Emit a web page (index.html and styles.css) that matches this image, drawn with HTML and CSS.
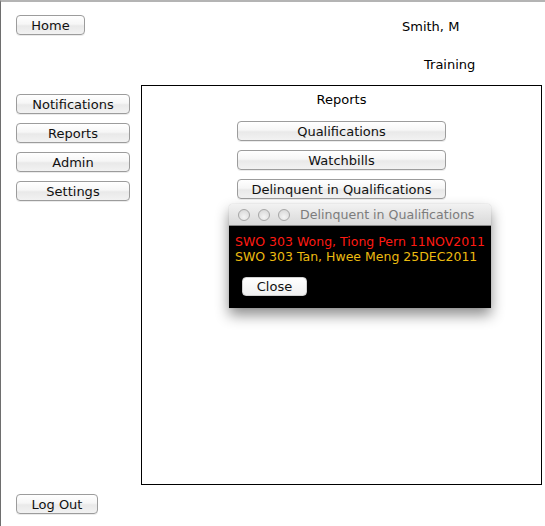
FILE: index.html
```html
<!DOCTYPE html>
<html>
<head>
<meta charset="utf-8">
<link rel="stylesheet" href="styles.css">
</head>
<body>
<div class="window">
  <header class="header">
    <button class="btn btn-home">Home</button>
    <div class="user">
      <div class="user-name">Smith, M</div>
      <div class="user-role">Training</div>
    </div>
  </header>
  <div class="content">
    <nav class="nav">
      <button class="btn btn-nav">Notifications</button>
      <button class="btn btn-nav">Reports</button>
      <button class="btn btn-nav">Admin</button>
      <button class="btn btn-nav">Settings</button>
    </nav>
    <main class="panel">
      <div class="panel-title">Reports</div>
      <div class="report-list">
        <button class="btn btn-report">Qualifications</button>
        <button class="btn btn-report">Watchbills</button>
        <button class="btn btn-report">Delinquent in Qualifications</button>
      </div>
    </main>
  </div>
  <footer class="footer">
    <button class="btn btn-logout">Log Out</button>
  </footer>

  <div class="dialog">
    <div class="dialog-titlebar">
      <span class="light"></span><span class="light"></span><span class="light"></span>
      <span class="dialog-title">Delinquent in Qualifications</span>
    </div>
    <div class="dialog-body">
      <div class="line line-red">SWO 303 Wong, Tiong Pern 11NOV2011</div>
      <div class="line line-yellow">SWO 303 Tan, Hwee Meng 25DEC2011</div>
      <button class="btn btn-close">Close</button>
    </div>
  </div>
</div>
</body>
</html>
```

FILE: styles.css
```css
* { box-sizing: border-box; }
html, body { margin: 0; padding: 0; background: #fff; }
body {
  font-family: "DejaVu Sans", "Liberation Sans", sans-serif;
  font-size: 13px;
  color: #000;
}
.window {
  position: relative;
  width: 545px;
  height: 526px;
  border-top: 2px solid #b4b4b4;
  border-left: 1px solid #6e6e6e;
  overflow: hidden;
}
.btn {
  font-family: "DejaVu Sans", "Liberation Sans", sans-serif;
  font-size: 13px;
  color: #111;
  height: 20px;
  padding: 1px 0 0 0;
  line-height: 17px;
  border: 1px solid #9c9c9c;
  border-radius: 4px;
  background: linear-gradient(#ffffff 0%, #f6f6f6 45%, #e9e9e9 55%, #f2f2f2 100%);
  box-shadow: 0 1px 0 rgba(0,0,0,0.08);
  text-align: center;
}
.header {
  display: flex;
  align-items: flex-start;
  padding: 13px 0 0 15px;
  height: 83px;
}
.btn-home { width: 69px; }
.user {
  margin-left: 317px;
  display: flex;
  flex-direction: column;
}
.user-name { padding-top: 4px; height: 42px; }
.user-role { padding-left: 22px; }
.content {
  display: flex;
  align-items: flex-start;
}
.nav {
  display: flex;
  flex-direction: column;
  gap: 9px;
  padding: 9px 0 0 15px;
  width: 140px;
}
.btn-nav { width: 114px; }
.panel {
  width: 401px;
  height: 400px;
  border: 1px solid #000;
  display: flex;
  flex-direction: column;
  align-items: center;
}
.panel-title { padding-top: 6px; height: 35px; }
.report-list {
  display: flex;
  flex-direction: column;
  gap: 9px;
}
.btn-report { width: 209px; }
.footer {
  padding: 9px 0 0 15px;
}
.btn-logout { width: 82px; }

.dialog {
  position: absolute;
  left: 228px;
  top: 202px;
  width: 262px;
  box-shadow: 0 7px 14px rgba(0,0,0,0.45), 0 0 1px rgba(0,0,0,0.3);
  border-radius: 4px 4px 0 0;
}
.dialog-titlebar {
  height: 22px;
  display: flex;
  align-items: center;
  padding-left: 9px;
  gap: 8px;
  border-radius: 4px 4px 0 0;
  background: linear-gradient(#f2f2f2, #d9d9d9);
  border-bottom: 1px solid #8a8a8a;
}
.light {
  width: 12px;
  height: 12px;
  border-radius: 50%;
  border: 1px solid #a6a6a6;
  background: radial-gradient(circle at 50% 70%, #f4f4f4, #d4d4d4);
}
.dialog-title {
  margin-left: 2px;
  color: #7c7c7c;
  font-size: 12.6px;
}
.dialog-body {
  background: #000;
  padding: 8px 6px 11px 6px;
  height: 82px;
}
.line { line-height: 15px; white-space: nowrap; font-size: 12.5px; }
.line-red { color: #ff1a12; }
.line-yellow { color: #ecbb10; }
.btn-close {
  margin: 13px 0 0 7px;
  width: 65px;
  height: 19px;
  line-height: 17px;
  padding: 0;
  background: linear-gradient(#ffffff, #f0f0f0);
  border: 1px solid #d0d0d0;
}
```
